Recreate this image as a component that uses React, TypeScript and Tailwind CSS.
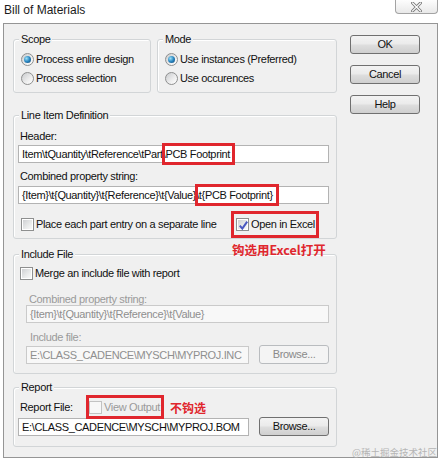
import React from "react";

function Check({ checked = false, disabled = false }: { checked?: boolean; disabled?: boolean }) {
  return (
    <span
      className={
        disabled
          ? "relative inline-flex h-[13px] w-[13px] shrink-0 items-center justify-center border border-[#c2c2c2] bg-[#f7f7f7]"
          : "relative inline-flex h-[13px] w-[13px] shrink-0 items-center justify-center border border-[#8e8f8f] bg-white p-[1px]"
      }
    >
      {!disabled && <span className="h-full w-full bg-[linear-gradient(135deg,#cfd1d3,#eceded_65%,#f8f8f8)]" />}
      {checked && (
        <svg className="absolute left-[1px] top-[1px]" width="11" height="11" viewBox="0 0 11 11">
          <path d="M1.8 5.6 L4.3 8.6 L9.2 1.6" fill="none" stroke="#4a58c0" strokeWidth="2" />
        </svg>
      )}
    </span>
  );
}

function Radio({ checked = false }: { checked?: boolean }) {
  return (
    <span className="inline-flex h-[13px] w-[13px] shrink-0 items-center justify-center rounded-full border border-[#8e8f8f] bg-[linear-gradient(135deg,#c9cbcd,#eeeeee_60%,#ffffff)]">
      {checked && (
        <span className="h-[7px] w-[7px] rounded-full bg-[radial-gradient(circle_at_35%_35%,#9be0f8,#2a86c0_50%,#0d3f6e)]" />
      )}
    </span>
  );
}

function Field({
  children,
  disabled = false,
  className = "",
}: {
  children: React.ReactNode;
  disabled?: boolean;
  className?: string;
}) {
  return (
    <div
      className={
        (disabled
          ? "flex h-[18px] items-center whitespace-nowrap border border-[#cacaca] bg-[#f8f8f8] pl-[3px] leading-[16px] text-[#8f8f8f] "
          : "flex h-[18px] items-center whitespace-nowrap border border-[#b3b3b3] bg-white pl-[3px] leading-[16px] text-[#111] ") + className
      }
    >
      {children}
    </div>
  );
}

function Btn({ children, disabled = false }: { children: React.ReactNode; disabled?: boolean }) {
  return (
    <div
      className={
        disabled
          ? "flex h-[19px] w-[70px] shrink-0 items-center justify-center rounded-[3px] border border-[#b9bcbf] bg-[#f4f4f4] text-[#8a8a8a]"
          : "flex h-[19px] w-[70px] shrink-0 items-center justify-center rounded-[3px] border border-[#707070] bg-[linear-gradient(#f3f3f3,#ebebeb_45%,#dddddd_55%,#cfcfcf)] text-[#111]"
      }
    >
      {children}
    </div>
  );
}

function Group({
  title,
  className = "",
  children,
}: {
  title: string;
  className?: string;
  children?: React.ReactNode;
}) {
  return (
    <div className={"relative rounded-[3px] border border-[#d2d5d7] shadow-[inset_1px_1px_0_#ffffff] " + className}>
      <span className="absolute -top-[7px] left-[5px] bg-[#f0f0f0] px-[2px] leading-[13px] text-[#111]">{title}</span>
      {children}
    </div>
  );
}

function RedBox({ className }: { className: string }) {
  return <span className={"pointer-events-none absolute border-[3px] border-[#e0262d] " + className} />;
}

export default function App() {
  return (
    <div className="relative h-[460px] w-[440px] overflow-hidden bg-white font-['Liberation_Sans',Arial,sans-serif] text-[11px] tracking-[-0.35px] text-[#111]">
      {/* title bar */}
      <div className="flex h-[23px] items-start justify-between">
        <div className="pl-[4px] pt-[2px] text-[12px] leading-[16px] tracking-normal text-[#1b1b1b]">Bill of Materials</div>
        <div className="mr-[2px] flex h-[14px] w-[43px] items-center justify-center rounded-b-[4px] border border-t-0 border-[#a3a3a3] bg-[linear-gradient(#fdfdfd,#e9e9e9)]">
          <svg width="11" height="10" viewBox="0 0 11 10">
            <path d="M1.5 1 L9.5 9 M9.5 1 L1.5 9" stroke="#7a7a7a" strokeWidth="3" strokeLinecap="square" />
            <path d="M1.5 1 L9.5 9 M9.5 1 L1.5 9" stroke="#ffffff" strokeWidth="1.2" strokeLinecap="square" />
          </svg>
        </div>
      </div>

      {/* dialog frame */}
      <div className="ml-[3px] flex h-[435px] w-[435px] border border-[#959595] bg-[#f0f0f0] pl-[9px]">
        {/* left column */}
        <div className="relative flex w-[324px] shrink-0 flex-col pt-[15px]">
          <div className="flex gap-[6px]">
            <Group title="Scope" className="h-[54px] w-[138px] pl-[7px] pt-[10px]">
              <div className="flex h-[19px] items-center gap-[2px]">
                <Radio checked />
                <span>Process enlire design</span>
              </div>
              <div className="flex h-[19px] items-center gap-[2px]">
                <Radio />
                <span>Process selection</span>
              </div>
            </Group>
            <Group title="Mode" className="h-[54px] w-[180px] pl-[7px] pt-[10px]">
              <div className="flex h-[19px] items-center gap-[2px]">
                <Radio checked />
                <span>Use instances (Preferred)</span>
              </div>
              <div className="flex h-[19px] items-center gap-[2px]">
                <Radio />
                <span>Use occurences</span>
              </div>
            </Group>
          </div>

          <Group title="Line Item Definition" className="mt-[22px] h-[124px] pl-[4px] pr-[7px] pt-[14px]">
            <div className="ml-[2px] h-[12px] leading-[12px]">Header:</div>
            <Field className="mt-[3px]">
              <span>Item\tQuantity\tReference\tPart</span>
              <span className="relative inline-block leading-[16px]">
                \PCB Footprint
                <RedBox className="-bottom-[3px] -left-[1px] -right-[5px] -top-[3px]" />
              </span>
            </Field>
            <div className="ml-[2px] mt-[7px] h-[12px] leading-[12px]">Combined property string:</div>
            <Field className="mt-[4px]">
              <span>{"{Item}\\t{Quantity}\\t{Reference}\\t{Value}"}</span>
              <span className="relative inline-block leading-[16px]">
                {"\\t{PCB Footprint}"}
                <RedBox className="-bottom-[3px] -left-[1px] -right-[6px] -top-[3px]" />
              </span>
            </Field>
            <div className="mt-[14px] flex h-[13px] items-center">
              <div className="ml-[3px] flex w-[215px] items-center gap-[2px]">
                <Check />
                <span>Place each part entry on a separate line</span>
              </div>
              <div className="relative flex items-center gap-[2px]">
                <Check checked />
                <span className="whitespace-nowrap">Open in Excel</span>
                <RedBox className="-bottom-[5px] -left-[5px] -right-[4px] -top-[5px]" />
              </div>
            </div>
          </Group>

          <Group title="Include File" className="mt-[15px] h-[120px] pl-[4px] pr-[7px] pt-[12px]">
            <span className="absolute -top-[13px] left-[218px] whitespace-nowrap font-['Noto_Sans_CJK_SC',sans-serif] text-[12.5px] font-bold leading-[16px] tracking-normal text-[#e0262d]">
              钩选用Excel打开
            </span>
            <div className="ml-[2px] flex h-[13px] items-center gap-[2px]">
              <Check />
              <span>Merge an include file with report</span>
            </div>
            <div className="ml-[11px] mt-[13px] h-[12px] leading-[12px] text-[#9a9a9a]">Combined property string:</div>
            <Field disabled className="ml-[8px]">
              {"{Item}\\t{Quantity}\\t{Reference}\\t{Value}"}
            </Field>
            <div className="ml-[12px] mt-[8px] h-[12px] leading-[12px] text-[#9a9a9a]">Include file:</div>
            <div className="ml-[8px] mt-[2px] flex items-center gap-[10px]">
              <Field disabled className="w-[223px]">
                E:\CLASS_CADENCE\MYSCH\MYPROJ.INC
              </Field>
              <Btn disabled>Browse...</Btn>
            </div>
          </Group>

          <Group title="Report" className="mt-[13px] h-[60px] pl-[4px] pr-[7px] pt-[13px]">
            <div className="flex h-[13px] items-center">
              <span className="ml-[2px] w-[69px]">Report File:</span>
              <div className="relative flex items-center gap-[2px]">
                <Check disabled />
                <span className="whitespace-nowrap text-[#9a9a9a]">View Output</span>
                <RedBox className="-bottom-[3px] -left-[3px] -right-[4px] -top-[4px]" />
              </div>
              <span className="ml-[10px] whitespace-nowrap font-['Noto_Sans_CJK_SC',sans-serif] text-[12px] font-bold leading-[16px] tracking-normal text-[#e0262d]">
                不钩选
              </span>
            </div>
            <div className="mt-[3px] flex items-center gap-[10px]">
              <Field className="w-[231px]">E:\CLASS_CADENCE\MYSCH\MYPROJ.BOM</Field>
              <Btn>Browse...</Btn>
            </div>
          </Group>
        </div>

        {/* buttons */}
        <div className="ml-[13px] flex flex-col gap-[11px] pt-[11px]">
          <Btn>OK</Btn>
          <Btn>Cancel</Btn>
          <Btn>Help</Btn>
        </div>
      </div>

      <span className="absolute bottom-[2px] right-[3px] font-['Noto_Sans_CJK_SC',sans-serif] text-[9.5px] leading-[12px] tracking-normal text-[#b5b5b5]">
        @稀土掘金技术社区
      </span>
    </div>
  );
}
